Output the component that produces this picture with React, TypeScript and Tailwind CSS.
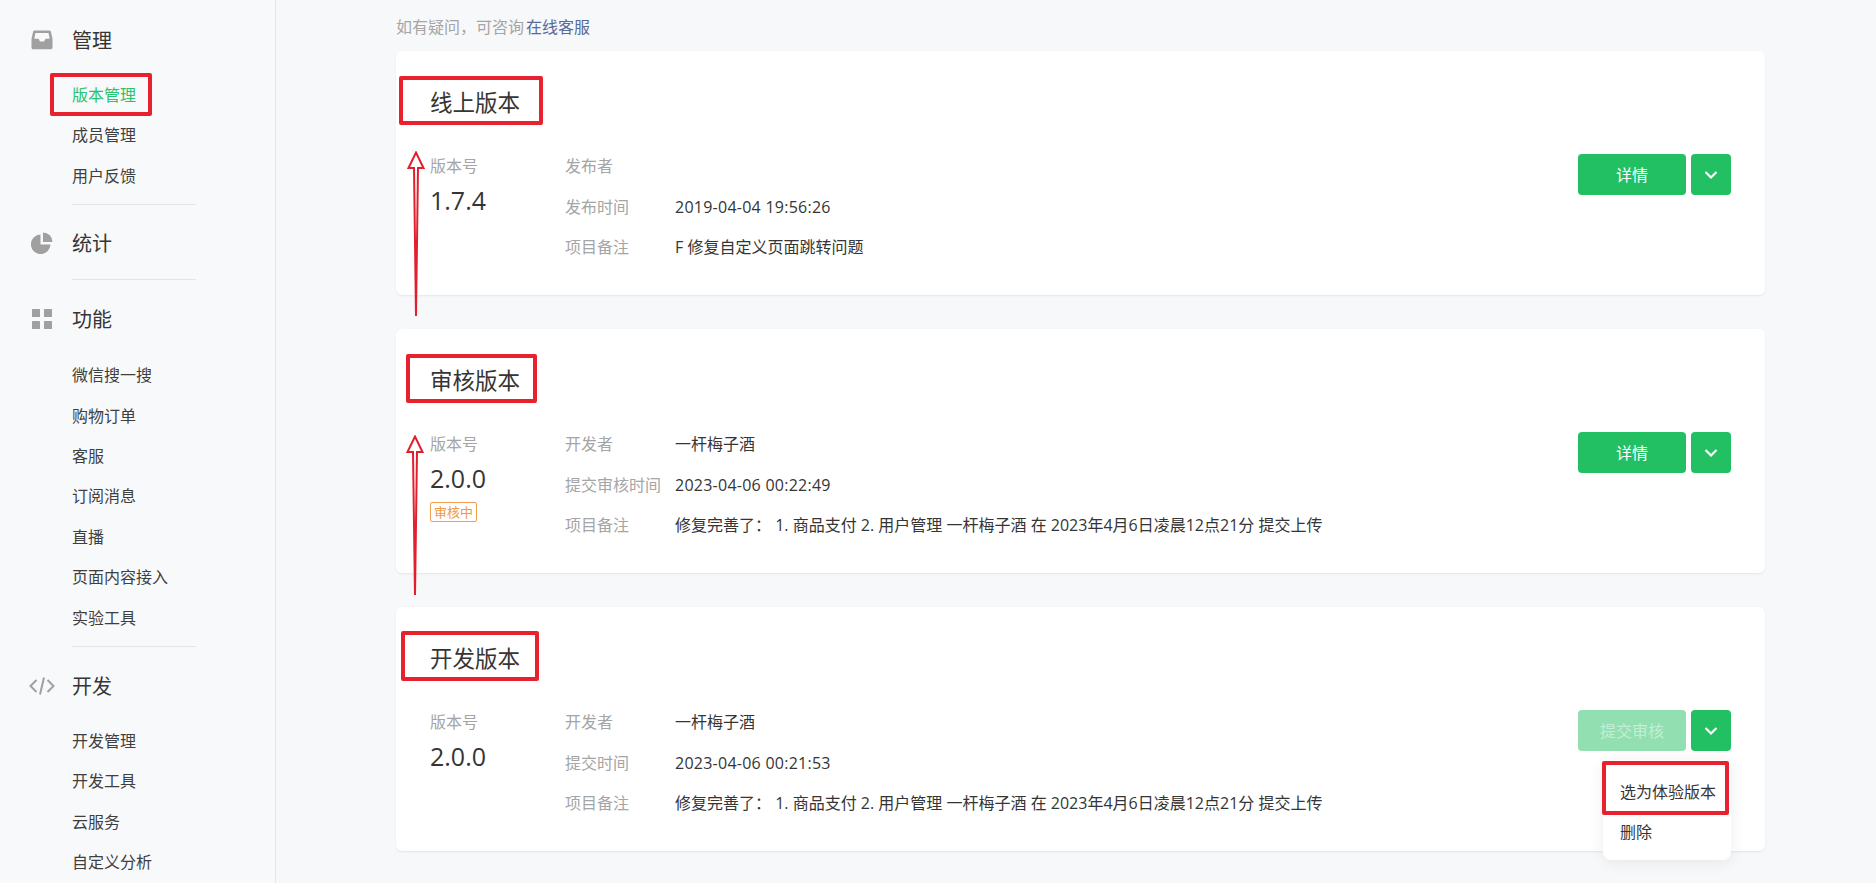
import React from "react";

const font = { fontFamily: '"Open Sans", "Noto Sans CJK SC", sans-serif' };

function Chevron() {
  return (
    <svg width="14" height="10" viewBox="0 0 14 10" fill="none">
      <path d="M1.500 2 L7 7.500 L12.500 2" stroke="white" strokeWidth="2.200" />
    </svg>
  );
}

function InboxIcon() {
  return (
    <svg width="22" height="20" viewBox="0 0 22 20">
      <path fillRule="evenodd" fill="#a0a0a0" d="M4 0.500h14c1 0 1.600.5 2 1.400L21.500 9v8.500c0 1-.8 1.800-1.800 1.800H2.300c-1 0-1.800-.8-1.800-1.800V9L2 1.900C2.400 1 3 .5 4 .5zM4.500 3 3.300 8.700H7.500L9 11.500h4L14.500 8.700h4.200L17.500 3z" />
    </svg>
  );
}

function PieIcon() {
  return (
    <svg width="22" height="22" viewBox="0 0 22 22">
      <path fill="#a0a0a0" d="M9.500 2.500v10h10A9.800 9.800 0 1 1 9.500 2.500z" />
      <path fill="#a0a0a0" d="M12 0.500A9.500 9.500 0 0 1 21.500 10H12z" />
    </svg>
  );
}

function GridIcon() {
  return (
    <svg width="20" height="20" viewBox="0 0 20 20" fill="#a0a0a0">
      <rect x="0" y="0" width="8" height="8" rx="0.500" />
      <rect x="12" y="0" width="8" height="8" rx="0.500" />
      <rect x="0" y="12" width="8" height="8" rx="0.500" />
      <rect x="12" y="12" width="8" height="8" rx="0.500" />
    </svg>
  );
}

function CodeIcon() {
  return (
    <svg width="26" height="20" viewBox="0 0 26 20" fill="none" stroke="#a0a0a0" strokeWidth="2">
      <path d="M7.500 4 L1.500 10 L7.500 16" />
      <path d="M18.500 4 L24.500 10 L18.500 16" />
      <path d="M15 1.500 L11 18.500" />
    </svg>
  );
}

function Heading({ icon, label }: { icon: React.ReactNode; label: string }) {
  return (
    <div className="flex h-[40px] items-center">
      <div className="flex w-[72px] items-center justify-center pl-[12px]">{icon}</div>
      <span className="mt-[2px] text-[20px] leading-[40px] text-[#353535]">{label}</span>
    </div>
  );
}

function SubItem({ label, active }: { label: string; active?: boolean }) {
  return (
    <div className={`h-[40.4px] pl-[72px] text-[16px] leading-[42.4px] ${active ? "text-[#2ac36a]" : "text-[#3f3f3f]"}`}>
      {label}
    </div>
  );
}

function Divider() {
  return <div className="ml-[72px] h-[1px] w-[124px] bg-[#e3e4e6]" />;
}

function Sidebar() {
  return (
    <aside className="h-[883px] w-[276px] shrink-0 overflow-hidden border-r border-[#e6e7e9] bg-[#f8f9fb] pt-[20px]">
      <Heading icon={<InboxIcon />} label="管理" />
      <div className="mt-[14px]">
        <SubItem label="版本管理" active />
        <SubItem label="成员管理" />
        <SubItem label="用户反馈" />
      </div>
      <div className="mt-[9px]"><Divider /></div>
      <div className="mt-[18px]"><Heading icon={<PieIcon />} label="统计" /></div>
      <div className="mt-[16px]"><Divider /></div>
      <div className="mt-[19px]"><Heading icon={<GridIcon />} label="功能" /></div>
      <div className="mt-[15px]">
        {["微信搜一搜", "购物订单", "客服", "订阅消息", "直播", "页面内容接入", "实验工具"].map((t) => (
          <SubItem key={t} label={t} />
        ))}
      </div>
      <div className="mt-[9px]"><Divider /></div>
      <div className="mt-[19px]"><Heading icon={<CodeIcon />} label="开发" /></div>
      <div className="mt-[14px]">
        {["开发管理", "开发工具", "云服务", "自定义分析"].map((t) => (
          <SubItem key={t} label={t} />
        ))}
      </div>
    </aside>
  );
}

type Row = { label: string; value?: string; date?: boolean };

function VersionCard({
  title,
  version,
  rows,
  badge,
  disabled,
  action,
  children,
}: {
  title: string;
  version: string;
  rows: Row[];
  badge?: string;
  disabled?: boolean;
  action: string;
  children?: React.ReactNode;
}) {
  return (
    <section className="relative h-[244px] rounded-[6px] bg-white pl-[34px] pr-[34px] pt-[33px] shadow-[0_1px_2px_rgba(0,0,0,0.08)]">
      <h2 className="text-[22.500px] font-normal leading-[38px] text-[#353535]">{title}</h2>
      <div className="mt-[29px] flex items-start">
        <div className="w-[135px] shrink-0">
          <div className="-mt-[5px] text-[16px] leading-[41px] text-[#a5a5a5]">版本号</div>
          <div className="-mt-[4px] text-[25px] leading-[34px] text-[#353535]">{version}</div>
          {badge && (
            <div className="mt-[7px] inline-block h-[20px] rounded-[2px] border border-[#f0a050] px-[3px] text-[13px] leading-[18px] text-[#ef9a3f]">
              {badge}
            </div>
          )}
        </div>
        <div className="-mt-[5px] flex-1">
          {rows.map((r) => (
            <div key={r.label} className="flex h-[40.500px] items-center text-[16px]">
              <div className="w-[110px] shrink-0 text-[#a5a5a5]">{r.label}</div>
              <div className={r.date ? "tracking-[0.25px] text-[#353535]" : "text-[#353535]"}>{r.value}</div>
            </div>
          ))}
        </div>
        <div className="mt-[3px] flex shrink-0 items-center gap-[5px]">
          <button
            className={`h-[41px] w-[108px] rounded-[4px] text-[16px] ${disabled ? "bg-[#92e0b1] text-[#c3eed5]" : "bg-[#23c063] text-white"}`}
          >
            {action}
          </button>
          <button className="flex h-[41px] w-[40px] items-center justify-center rounded-[4px] bg-[#23c063]">
            <Chevron />
          </button>
        </div>
      </div>
      {children}
    </section>
  );
}

function RedBox({ className }: { className: string }) {
  return <div className={`pointer-events-none absolute rounded-[2px] border-[4px] border-[#e8212e] ${className}`} />;
}

function Arrow({ x, top, height }: { x: number; top: number; height: number }) {
  return (
    <svg
      className="pointer-events-none absolute"
      style={{ left: x - 9, top }}
      width="18"
      height={height}
      viewBox={`0 0 18 ${height}`}
      fill="none"
    >
      <path
        d={`M9 ${height} L7 17 L1.500 17 L9 1.500 L16.500 17 L11 17 Z`}
        stroke="#e1202d"
        strokeWidth="2"
        fill="white"
        strokeLinejoin="miter"
      />
    </svg>
  );
}

export default function App() {
  return (
    <div className="relative flex h-[883px] w-[1876px] overflow-hidden bg-[#f7f8fa]" style={font}>
      <Sidebar />
      <main className="ml-[120px] w-[1369px]">
        <div className="h-[51px] pt-[14px] text-[16px] leading-[26px] text-[#a5a5a5]">
          如有疑问，可咨询<span className="ml-[2px] text-[#576b95]">在线客服</span>
        </div>
        <div className="flex flex-col gap-[34px]">
          <VersionCard
            title="线上版本"
            version="1.7.4"
            action="详情"
            rows={[
              { label: "发布者", value: "" },
              { label: "发布时间", value: "2019-04-04 19:56:26", date: true },
              { label: "项目备注", value: "F 修复自定义页面跳转问题" },
            ]}
          />
          <VersionCard
            title="审核版本"
            version="2.0.0"
            badge="审核中"
            action="详情"
            rows={[
              { label: "开发者", value: "一杆梅子酒" },
              { label: "提交审核时间", value: "2023-04-06 00:22:49", date: true },
              { label: "项目备注", value: "修复完善了： 1. 商品支付 2. 用户管理 一杆梅子酒 在 2023年4月6日凌晨12点21分 提交上传" },
            ]}
          />
          <VersionCard
            title="开发版本"
            version="2.0.0"
            action="提交审核"
            disabled
            rows={[
              { label: "开发者", value: "一杆梅子酒" },
              { label: "提交时间", value: "2023-04-06 00:21:53", date: true },
              { label: "项目备注", value: "修复完善了： 1. 商品支付 2. 用户管理 一杆梅子酒 在 2023年4月6日凌晨12点21分 提交上传" },
            ]}
          >
            <div className="absolute left-[1207px] top-[153px] w-[128px] rounded-[8px] bg-white pb-[8px] pt-[12px] text-[16px] text-[#353535] shadow-[0_2px_16px_rgba(0,0,0,0.08)]">
              <div className="h-[40px] pl-[17px] leading-[40px]">选为体验版本</div>
              <div className="h-[40px] pl-[17px] leading-[40px]">删除</div>
            </div>
          </VersionCard>
        </div>
      </main>
      <RedBox className="left-[50px] top-[73px] h-[43px] w-[102px]" />
      <RedBox className="left-[399px] top-[76px] h-[49px] w-[144px]" />
      <RedBox className="left-[406px] top-[354px] h-[49px] w-[131px]" />
      <RedBox className="left-[401px] top-[631px] h-[50px] w-[138px]" />
      <RedBox className="left-[1602px] top-[761px] h-[54px] w-[127px]" />
      <Arrow x={416} top={151} height={165} />
      <Arrow x={415} top={435} height={160} />
    </div>
  );
}
